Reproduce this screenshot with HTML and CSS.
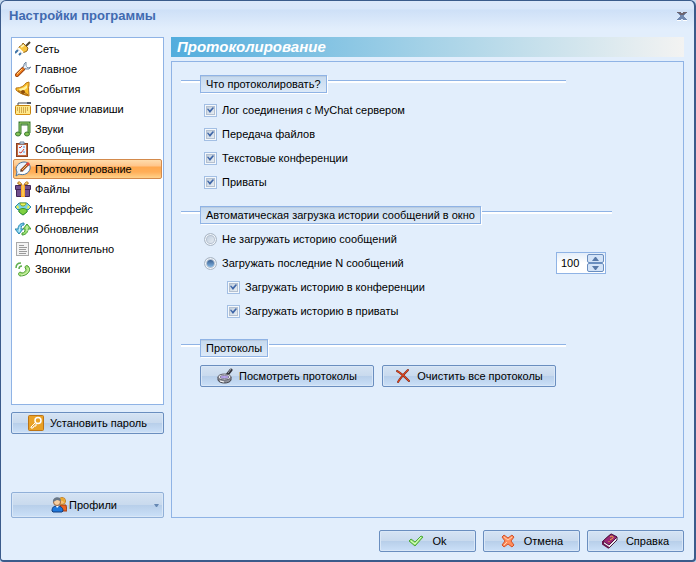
FILE: index.html
```html
<!DOCTYPE html>
<html lang="ru">
<head>
  <meta charset="UTF-8" />
  <meta name="viewport" content="width=device-width, initial-scale=1" />
  <title>Настройки программы</title>
  <link rel="stylesheet" href="styles.css">
</head>
<body>
  <div class="window">
    <header class="titlebar">
      <h1>Настройки программы</h1>
      <button class="close" type="button" aria-label="Закрыть">
        <svg width="10" height="9" viewBox="0 0 10 9"><path d="M0 8.500h4M6 8.500h4" stroke="#fff" fill="none"/><path d="M0 0h4v1h2V0h4v1H9v1H8v1H7v2h1v1h1v1h1v1H6V7H4v1H0V7h1V6h1V5h1V3H2V2H1V1H0z" fill="#7088b0"/><path d="M0 0h4v1h2V0h4v1H8v1H7v1H3V2H2V1H0z" fill="#6d6570"/></svg>
      </button>
    </header>

    <div class="main">
      <aside class="sidebar">
        <nav class="sections">
          <a href="#network">
            <svg class="icon" viewBox="0 0 16 16"><path d="M11 5l4-4" stroke="#4d4430" stroke-width="2"/><path d="M4 6l3-2 1-2 5 5-1 3-2 1-3 1-4-4z" fill="#f7c33f" stroke="#94651a"/><path d="M6 6l3-2" stroke="#fff6b8" stroke-width="2"/><path d="M3 7l5 5" stroke="#fff" stroke-width="2"/><path d="M3 9l-3 3M6 12l-2 2" stroke="#3f74a8" stroke-width="2"/></svg>
            Сеть</a>
          <a href="#main">
            <svg class="icon" viewBox="0 0 16 16"><path d="M8 8l3-3" stroke="#6f8299" stroke-width="4"/><path d="M11 1L9 3v3l2 2h3l2-2-3 1-2-2z" fill="#dce8f4" stroke="#7a8ea5"/><path d="M2 14l6-6" stroke="#a0440e" stroke-width="4" stroke-linecap="round"/><path d="M2 14l6-6" stroke="#f58220" stroke-width="2" stroke-linecap="round"/><path d="M2 13l5-5" stroke="#ffd684"/><path d="M9 7l2-2" stroke="#eef5fb" stroke-width="2"/></svg>
            Главное</a>
          <a href="#events">
            <svg class="icon" viewBox="0 0 16 16"><path d="M1 7c5 0 8-2 10-5l3-1v3c-1 3 0 7 0 11C9 14 4 12 1 9z" fill="#f9bd2c" stroke="#b87514"/><path d="M4 8c4-1 6-2 8-4v3c-2 2-4 3-7 3z" fill="#fff3a0"/><path d="M3 10c4 0 8 2 10 4-4 0-8-2-10-4z" fill="#ffdf70" stroke="#a8640c"/><circle cx="8" cy="11" r="2" fill="#8f4e0a"/></svg>
            События</a>
          <a href="#hotkeys">
            <svg class="icon" viewBox="0 0 16 16"><path d="M3 5V2h9" stroke="#444b55" fill="none"/><path d="M12 1h4v2h-4z" fill="#555d6a"/><rect x=".500" y="4.500" width="15" height="9" rx="1" fill="#ffe88a" stroke="#c4830f"/><path d="M2 7h12M2 9h12M4 11h8" stroke="#a96b0e" stroke-dasharray="1 1"/><path d="M1 13.500h14" stroke="#d99012"/></svg>
            Горячие клавиши</a>
          <a href="#sounds">
            <svg class="icon" viewBox="0 0 16 16"><path d="M5 13V2h9v10" fill="none" stroke="#3a7a32" stroke-width="3"/><path d="M5 4h9" stroke="#3a7a32"/><path d="M5 13V2h9v10" stroke="#9bd06a" fill="none"/><ellipse cx="3" cy="13" rx="2.500" ry="2" fill="#84c255" stroke="#3a7a32"/><ellipse cx="12" cy="13" rx="2.500" ry="2" fill="#84c255" stroke="#3a7a32"/></svg>
            Звуки</a>
          <a href="#messages">
            <svg class="icon" viewBox="0 0 16 16"><rect x="1.500" y="2.500" width="11" height="13" fill="#c4693f" stroke="#8c4224"/><path d="M3 4h8v10H3z" fill="#edf5ff"/><path d="M4 6l1 1 2-2M4 11l2 1 3-4" stroke="#d43d36" fill="none"/><path d="M8 6h2M8 11h2" stroke="#5f8fd0"/><path d="M5 1h4v2H5z" fill="#dbe6f2" stroke="#6e84a0"/></svg>
            Сообщения</a>
          <a class="active" href="#logging" aria-current="page">
            <svg class="icon" viewBox="0 0 16 16"><path d="M1 15l1-4C-1 6 4 1 9 1c4 0 7 3 6 7s-6 7-11 5z" fill="#e9f3fd" stroke="#4a749e"/><path d="M4 11c3 2 8 1 9-4" fill="none" stroke="#fff" stroke-width="2"/><path d="M6 10l7-7" stroke="#974a20" stroke-width="3"/><path d="M7 9l5-5" stroke="#ffc26b"/><path d="M12 4l2-2" stroke="#e2453a" stroke-width="3"/><path d="M5 11l2-1-1-1z" fill="#333"/></svg>
            Протоколирование</a>
          <a href="#files">
            <svg class="icon" viewBox="0 0 16 16"><path d="M.500 4.500h15v4H.500zM1.500 8.500h13v7h-13z" fill="#704e8e" stroke="#432758"/><path d="M6 4h4v12H6z" fill="#f9a92e"/><path d="M8 4v11" stroke="#ffe071"/><path d="M7 4C5-1 2 1 3 3zM9 4c2-5 5-3 4-1z" fill="#ffe071" stroke="#b0691a"/></svg>
            Файлы</a>
          <a href="#interface">
            <svg class="icon" viewBox="0 0 16 16"><path d="M4 2h8l4 4-3 3-1-1v3l-4 3-4-3V8L3 9 0 6z" fill="#7ad0e6" stroke="#2d8cab"/><path d="M5 2c0 4 6 4 6 0z" fill="#eaf25c" stroke="#83a52c"/><path d="M1 6l2-2 1 3-1 1zM15 6l-2-2-1 3 1 1z" fill="#e8f04a"/><path d="M4 9c2-2 6-2 8 0v2l-4 3-4-3z" fill="#7ed042" stroke="#3f9428"/></svg>
            Интерфейс</a>
          <a href="#updates">
            <svg class="icon" viewBox="0 0 16 16"><path d="M9 2C6 2 3 4 3 8H0l4 5 4-5H6c0-3 1-4 3-4z" fill="#79cdea" stroke="#2c87b0"/><path d="M7 14c3 0 6-2 6-6h3l-4-5-4 5h2c0 3-1 4-3 4z" fill="#9be070" stroke="#459c38"/><path d="M5 6l-1 5" stroke="#d5f3fb"/><path d="M12 5v5" stroke="#dcf8c4"/></svg>
            Обновления</a>
          <a href="#extra">
            <svg class="icon" viewBox="0 0 16 16"><rect x="1.500" y="1.500" width="12" height="13" fill="#f3f3f3" stroke="#a9a9a9"/><path d="M4 4.500h5M4 6.500h8M4 8.500h7M4 10.500h8M4 12.500h7" stroke="#9a9a9a"/></svg>
            Дополнительно</a>
          <a href="#calls">
            <svg class="icon" viewBox="0 0 16 16"><path d="M13 5c4 4 0 10-8 10-2-1-2-3 0-4l2 1c2 0 4-2 4-4l-1-1c0-2 1-3 3-2z" fill="#a8e27a" stroke="#4e9d36"/><path d="M13 7c1 4-2 6-7 7" stroke="#d9f5b8" fill="none"/><path d="M1 7c0-3 2-5 5-5M4 8c0-2 1-3 3-3" stroke="#5fae4e" stroke-width="1.500" fill="none"/></svg>
            Звонки</a>
        </nav>

        <button class="button" type="button">
          <svg class="icon" viewBox="0 0 16 16"><rect x=".500" y=".500" width="15" height="15" rx="1" fill="#e9a126" stroke="#bd7415"/><circle cx="10" cy="5.500" r="3" fill="none" stroke="#fff" stroke-width="1.500"/><path d="M8 7l-5 5v1h2l1-2h2V9" fill="none" stroke="#fff"/></svg>
          Установить пароль</button>

        <button class="button profiles" type="button">
          <svg class="icon" viewBox="0 0 16 16"><path d="M9 8h6l1 6h-5z" fill="#ed6421" stroke="#a13e16"/><circle cx="11" cy="4" r="3.500" fill="#f5bf79" stroke="#bd7b22"/><path d="M8 3c1-4 7-3 6 4l-2-3z" fill="#eaaa2f"/><path d="M1 14c0-4 2-5 5-5s6 1 6 5l-1 1H2z" fill="#1e78dc" stroke="#123c7c"/><circle cx="6" cy="5" r="3.500" fill="#f8cfa0" stroke="#9b653d"/><path d="M2 5c-1-5 8-7 8-1L6 3z" fill="#697786"/><path d="M5 9l1 2 2-2" fill="#fff"/></svg>
          Профили
          <svg class="arrow" width="5" height="3" viewBox="0 0 5 3"><path d="M0 0h5L3 3H2z" fill="#6688b3"/></svg>
        </button>
      </aside>

      <main class="content">
        <h2>Протоколирование</h2>
        <form class="panel">
          <fieldset>
            <legend><span>Что протоколировать?</span></legend>
            <div class="options">
              <label><input type="checkbox" checked> Лог соединения с MyChat сервером</label>
              <label><input type="checkbox" checked> Передача файлов</label>
              <label><input type="checkbox" checked> Текстовые конференции</label>
              <label><input type="checkbox" checked> Приваты</label>
            </div>
          </fieldset>

          <fieldset class="history">
            <legend><span>Автоматическая загрузка истории сообщений в окно</span></legend>
            <div class="options">
              <label><input type="radio" name="history"> Не загружать историю сообщений</label>
              <div class="limit">
                <label><input type="radio" name="history" checked> Загружать последние N сообщений</label>
                <div class="spinner">
                  <input type="text" value="100" aria-label="Количество сообщений">
                  <div class="steps">
                    <button type="button" aria-label="Больше"><svg width="7" height="4" viewBox="0 0 7 4"><path d="M0 4h7L4 0H3z" fill="#5879a8"/></svg></button>
                    <button type="button" aria-label="Меньше"><svg width="7" height="4" viewBox="0 0 7 4"><path d="M0 0h7L4 4H3z" fill="#5879a8"/></svg></button>
                  </div>
                </div>
              </div>
              <label class="nested"><input type="checkbox" checked> Загружать историю в конференции</label>
              <label class="nested"><input type="checkbox" checked> Загружать историю в приваты</label>
            </div>
          </fieldset>

          <fieldset>
            <legend><span>Протоколы</span></legend>
            <div class="actions">
              <button class="button" type="button">
                <svg class="icon" viewBox="0 0 16 16"><path d="M10 7l4-5" stroke="#303038" stroke-width="3" stroke-linecap="round"/><path d="M11 5l3-4" stroke="#9fa3ad"/><path d="M1 9v3c1 4 12 4 13 0V9" fill="#8d909a" stroke="#45454d"/><ellipse cx="7.500" cy="9" rx="6.500" ry="3" fill="#e6e6ea" stroke="#60606b"/><ellipse cx="7.500" cy="9" rx="4.500" ry="1.500" fill="#b9a2f2" stroke="#88859c"/><path d="M3 13l4 1" stroke="#fff"/></svg>
                Посмотреть протоколы</button>
              <button class="button" type="button">
                <svg class="icon" viewBox="0 0 16 16"><path d="M2 3c4 2 8 6 12 10M13 2C9 6 6 9 3 14" stroke="#8b2e1b" stroke-width="2" stroke-linecap="round" fill="none"/><path d="M2 3c4 2 8 6 12 10M13 2C9 6 6 9 3 14" stroke="#f0481c" fill="none"/></svg>
                Очистить все протоколы</button>
            </div>
          </fieldset>
        </form>
      </main>
    </div>

    <footer class="footer">
      <button class="button" type="button">
        <svg class="icon" viewBox="0 0 16 16"><path d="M1 8l2-2 4 3 6-6 2 1-8 9z" fill="#9ee779" stroke="#4ba83a"/><path d="M3 8l4 3 6-7" stroke="#ddffc8" fill="none"/></svg>
        Ok</button>
      <button class="button" type="button">
        <svg class="icon" viewBox="0 0 16 16"><path d="M4 2l4 3 4-3 2 2-3 4 3 4-2 2-4-3-4 3-2-2 3-4-3-4z" fill="#ff8d5c" stroke="#d2532c"/><path d="M4 4l4 3 4-3M4 12l3-3" stroke="#ffd1b0" fill="none"/></svg>
        Отмена</button>
      <button class="button" type="button">
        <svg class="icon" viewBox="0 0 16 16"><path d="M1 8l8-7 6 3v3l-8 8-6-4z" fill="#f0eef4" stroke="#44213d"/><path d="M1 8l8-7 6 3-8 8z" fill="#9c2775" stroke="#531641"/><path d="M1 8v3l6 4" fill="none" stroke="#65194e" stroke-width="2"/><path d="M8 4c2-2 4 0 3 1L8 7M7 8v1" stroke="#efb43d" fill="none"/></svg>
        Справка</button>
    </footer>
  </div>
</body>
</html>
```
FILE: styles.css
```css
* {
  box-sizing: border-box;
}
body {
  margin: 0;
  background: #c6d9ee;
  font-family: "Liberation Sans", Arial, sans-serif;
  font-size: 11px;
  line-height: 16px;
  color: #000;
}
button,
input {
  font: inherit;
  color: inherit;
}
.window {
  display: flex;
  flex-direction: column;
  min-height: 100vh;
  padding: 0 10px 8px;
  border: 1px solid #3b5b8b;
  border-right-width: 2px;
  border-bottom-width: 2px;
  border-radius: 6px 6px 4px 4px;
  background: linear-gradient(#dce8fa, #d8e6fa 8px, #cee0f7 9px, #e2eefc 28px, #e2eefc);
}
.titlebar {
  display: flex;
  align-items: center;
  justify-content: space-between;
  height: 36px;
  padding-bottom: 6px;
  margin-left: -2px;
}
h1 {
  margin: 0;
  font-size: 13px;
  color: #416ab0;
}
.close {
  display: flex;
  padding: 0;
  margin-right: -3px;
  border: 0;
  background: none;
}
.icon {
  flex: none;
  width: 16px;
  height: 16px;
}

/* columns */
.main {
  display: flex;
  flex: 1;
  gap: 7px;
}
.sidebar {
  display: flex;
  flex-direction: column;
  flex: none;
  width: 153px;
}
.sections {
  flex: 1;
  padding: 1px;
  margin-bottom: 7px;
  border: 1px solid #8fb3e5;
  background: #fff;
}
.sections a {
  display: flex;
  align-items: center;
  gap: 4px;
  height: 20px;
  padding-left: 1px;
  border: 1px solid transparent;
  color: #000;
  text-decoration: none;
}
.sections .active {
  border-color: #d38a4c;
  border-radius: 2px;
  background: linear-gradient(#ffdcab, #ffc58a 6px, #ffa84e 7px, #ffae58 12px, #ffd28b);
}
.content {
  display: flex;
  flex: 1;
  flex-direction: column;
  gap: 4px;
}
h2 {
  margin: 0;
  padding: 0 6px;
  background: linear-gradient(to right, #52addd, #a5d2e7 50%, #f3f3f2);
  color: #fff;
  font-size: 15px;
  font-style: italic;
  line-height: 20px;
}
.panel {
  flex: 1;
  padding: 13px 9px;
  border: 1px solid #8fb3e5;
}

/* buttons */
.button {
  display: flex;
  align-items: center;
  justify-content: center;
  gap: 6px;
  height: 22px;
  padding: 0 12px;
  border: 1px solid #6a8ebf;
  border-radius: 2px;
  background: linear-gradient(#d5e3f3, #c9daee 48%, #b8cfea 52%, #cbe0f8);
  box-shadow: inset 0 0 0 1px #d9e7f7;
  white-space: nowrap;
}
.profiles {
  gap: 2px;
  height: 26px;
  padding: 0 4px;
  margin-top: 58px;
  border-color: #91b0d8;
}
.profiles .icon {
  margin-left: auto;
}
.arrow {
  margin-left: auto;
}
.actions {
  display: flex;
  gap: 8px;
  padding: 8px 0 0 19px;
}
.actions .button {
  min-width: 174px;
}
.footer {
  display: flex;
  justify-content: flex-end;
  gap: 7px;
  padding-top: 12px;
}
.footer .button {
  width: 97px;
  gap: 8px;
}

/* option groups */
fieldset {
  min-width: 0;
  max-width: 385px;
  padding: 0;
  margin: 0 0 12px;
  border: 0;
}
.history {
  max-width: 431px;
  margin-bottom: 16px;
}
legend {
  display: flex;
  width: 100%;
  padding: 0;
}
legend::before,
legend::after {
  content: "";
  height: 2px;
  margin-top: 5px;
  border-top: 1px solid #8fb3e5;
  background: #fff;
}
legend::before {
  width: 19px;
}
legend::after {
  flex: 1;
}
legend span {
  padding: 0 5px;
  margin-right: 1px;
  border: 1px solid #8fb3e5;
  background: linear-gradient(#c5d9ee, #dce9f8);
  box-shadow: 1px 1px #fff, inset 0 1px #b9cbe0;
}
.options {
  display: flex;
  flex-direction: column;
  padding: 5px 0 0 23px;
}
.history .options {
  padding-top: 3px;
}
.options label {
  display: flex;
  align-items: center;
  gap: 5px;
  height: 24px;
}
.options .nested {
  margin-left: 23px;
}
input[type="checkbox"],
input[type="radio"] {
  display: grid;
  place-items: center;
  flex: none;
  width: 13px;
  height: 13px;
  margin: 0;
  border: 1px solid #a3bfe4;
  outline: none;
  appearance: none;
  background: linear-gradient(135deg, #b8c7d8, #f1f5f9);
  box-shadow: inset 0 0 0 1px #f4f8fc, inset 0 0 0 2px #b4c0d0;
}
input[type="checkbox"]::after {
  content: "";
  width: 7px;
  height: 6px;
  background: #3f66a8;
  clip-path: polygon(0 35%, 15% 25%, 40% 55%, 85% 0, 100% 15%, 42% 100%);
}
input[type="radio"] {
  border-color: #abb7c5;
  border-radius: 50%;
}
input[type="radio"]:checked::after {
  content: "";
  width: 7px;
  height: 7px;
  border-radius: 50%;
  background: linear-gradient(#385f91, #82b4e1);
}
.limit {
  display: flex;
  align-items: center;
  justify-content: space-between;
  height: 24px;
  padding-right: 6px;
}
.spinner {
  display: flex;
  width: 50px;
  height: 22px;
  padding: 1px;
  border: 1px solid #8fb3e5;
  background: linear-gradient(#e4eefa, #fff 10px);
}
.spinner input {
  flex: 1;
  width: 0;
  padding: 0 0 0 3px;
  border: 0;
  background: none;
}
.steps {
  display: flex;
  flex-direction: column;
}
.steps button {
  display: grid;
  place-items: center;
  flex: 1;
  width: 17px;
  padding: 0;
  border: 1px solid #6a8ebf;
  border-radius: 2px;
  background: #d3e3f7;
}
```
